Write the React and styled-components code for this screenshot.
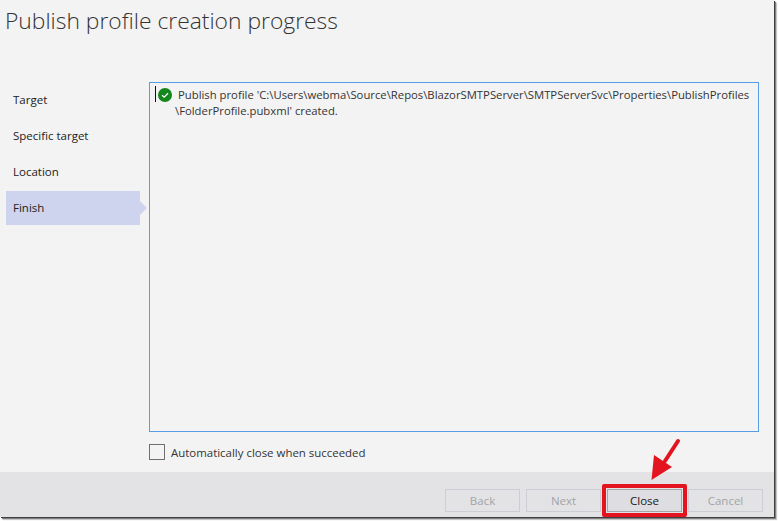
import React from "react";
import styled, { createGlobalStyle } from "styled-components";

const Global = createGlobalStyle`
  html, body { margin: 0; padding: 0; background: #fff; }
  body { width: 778px; height: 521px; overflow: hidden; }
`;

const Dialog = styled.div`
  box-sizing: border-box;
  width: 774px;
  height: 517px;
  background: #f3f3f3;
  display: flex;
  flex-direction: column;
  font-family: "Open Sans", "Noto Sans", sans-serif;
  color: #222;
  box-shadow: 1px 1px 0 #3f3f3f, 2px 2px 1px #808080, 3px 3px 1px #d4d4d4;
`;

const Title = styled.h1`
  margin: 0;
  padding: 5px 0 0 5px;
  height: 49px;
  box-sizing: border-box;
  font-family: "Open Sans", sans-serif;
  font-weight: 300;
  font-size: 22.85px;
  line-height: 32px;
  color: #333;
`;

const Body = styled.div`
  flex: 1;
  display: flex;
  padding: 33px 15px 0 6px;
  min-height: 0;
`;

const Nav = styled.nav`
  width: 134px;
  margin-right: 9px;
  display: flex;
  flex-direction: column;
  gap: 2px;
`;

const Step = styled.div`
  position: relative;
  box-sizing: border-box;
  height: 34px;
  padding-left: 7px;
  display: flex;
  align-items: center;
  font-size: 11.5px;
  color: #222;
  background: ${(p) => (p.$active ? "#ced4ee" : "transparent")};
  ${(p) =>
    p.$active
      ? `margin-top: 1px;
  padding-bottom: 2px;
  &::after {
    content: "";
    position: absolute;
    right: -7px;
    top: 10px;
    border-left: 7px solid #ced4ee;
    border-top: 7px solid transparent;
    border-bottom: 7px solid transparent;
  }`
      : ""}
`;

const Main = styled.div`
  flex: 1;
  display: flex;
  flex-direction: column;
  min-width: 0;
`;

const LogBox = styled.div`
  box-sizing: border-box;
  height: 350px;
  border: 1px solid #569de5;
  padding: 4px 0 0 5px;
  display: flex;
  align-items: flex-start;
`;

const Caret = styled.span`
  width: 1px;
  height: 16px;
  background: #111;
  margin: -1px 2px 0 0;
  flex: none;
`;

const OkIcon = styled.svg`
  width: 14px;
  height: 14px;
  flex: none;
  margin: 1px 6px 0 0;
`;

const LogText = styled.div`
  font-size: 11.3px;
  line-height: 16px;
  color: #333;
  white-space: pre;
`;

const Indent = styled.span`
  margin-left: -3px;
`;

const AutoClose = styled.label`
  display: flex;
  align-items: center;
  gap: 6px;
  margin-top: 12px;
  font-size: 11.45px;
  color: #333;
`;

const CheckBox = styled.span`
  box-sizing: border-box;
  width: 16px;
  height: 16px;
  border: 1px solid #707070;
  background: #f3f3f3;
`;

const Footer = styled.div`
  height: 45px;
  box-sizing: border-box;
  background: #e3e3e5;
  display: flex;
  justify-content: flex-end;
  align-items: flex-start;
  gap: 6px;
  padding: 17px 11px 0 0;
`;

const Button = styled.div`
  box-sizing: border-box;
  width: 75px;
  height: 23px;
  display: flex;
  align-items: center;
  justify-content: center;
  font-size: 11.5px;
  border: 1px solid ${(p) => (p.$enabled ? "#a5a5a5" : "#ccced6")};
  background: ${(p) => (p.$enabled ? "#dddde2" : "transparent")};
  color: ${(p) => (p.$enabled ? "#1a1a1a" : "#a2a4a8")};
`;

const Highlight = styled.div`
  position: absolute;
  left: 602px;
  top: 484px;
  width: 85px;
  height: 33px;
  box-sizing: border-box;
  border: 4px solid #e3141f;
  border-radius: 2px;
  pointer-events: none;
`;

const Arrow = styled.svg`
  position: absolute;
  left: 648px;
  top: 436px;
  width: 36px;
  height: 48px;
  pointer-events: none;
`;

export default function App() {
  return (
    <>
      <Global />
      <Dialog>
        <Title>Publish profile creation progress</Title>
        <Body>
          <Nav>
            <Step>Target</Step>
            <Step>Specific target</Step>
            <Step>Location</Step>
            <Step $active>Finish</Step>
          </Nav>
          <Main>
            <LogBox>
              <Caret />
              <OkIcon viewBox="0 0 14 14">
                <circle cx="7" cy="7" r="7" fill="#12871b" />
                <path d="M4 7.2 L6.2 9.2 L10 5.2" fill="none" stroke="#fff" strokeWidth="1.3" />
              </OkIcon>
              <LogText>
                {"Publish profile 'C:\\Users\\webma\\Source\\Repos\\BlazorSMTPServer\\SMTPServerSvc\\Properties\\PublishProfiles\n"}
                <Indent>{"\\FolderProfile.pubxml' created."}</Indent>
              </LogText>
            </LogBox>
            <AutoClose>
              <CheckBox />
              Automatically close when succeeded
            </AutoClose>
          </Main>
        </Body>
        <Footer>
          <Button>Back</Button>
          <Button>Next</Button>
          <Button $enabled>Close</Button>
          <Button>Cancel</Button>
        </Footer>
      </Dialog>
      <Highlight />
      <Arrow viewBox="0 0 36 48">
        <path d="M30 5 L17 25" stroke="#e3141f" strokeWidth="4" strokeLinecap="round" fill="none" />
        <path d="M3.5 44 L6 19 L24 31 Z" fill="#e3141f" />
      </Arrow>
    </>
  );
}
